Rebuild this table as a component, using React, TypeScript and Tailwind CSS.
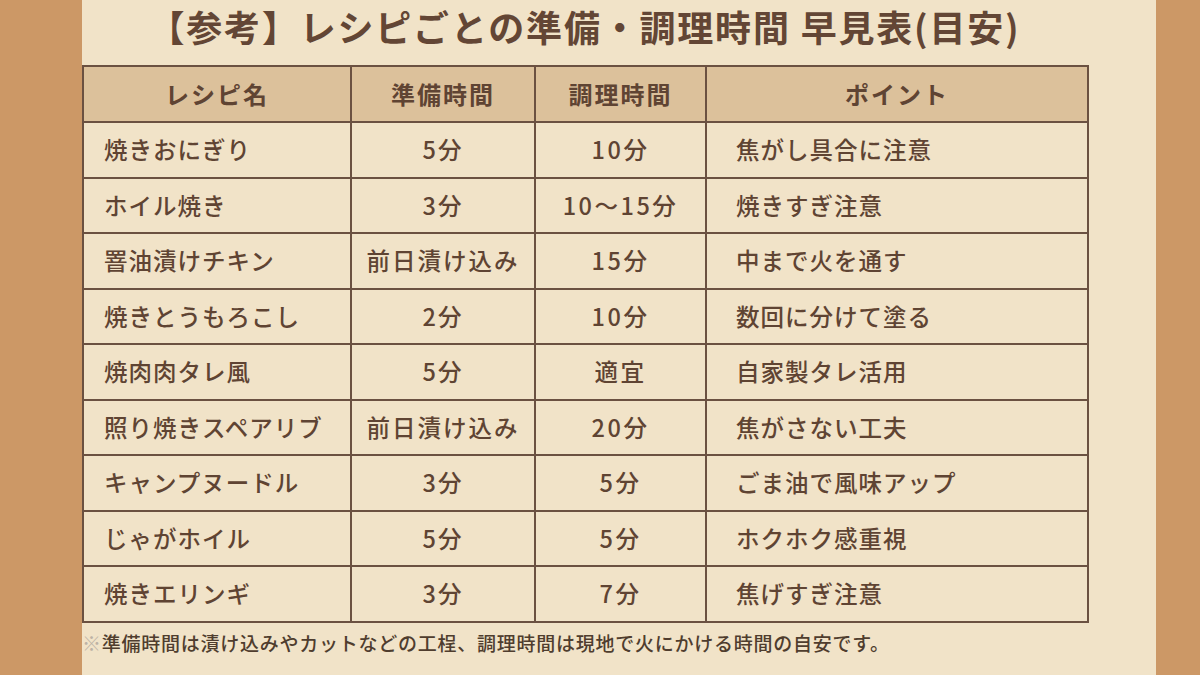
const rows = [
  { name: "焼きおにぎり", prep: "5分", cook: "10分", point: "焦がし具合に注意" },
  { name: "ホイル焼き", prep: "3分", cook: "10～15分", point: "焼きすぎ注意" },
  { name: "罯油漬けチキン", prep: "前日漬け込み", cook: "15分", point: "中まで火を通す" },
  { name: "焼きとうもろこし", prep: "2分", cook: "10分", point: "数回に分けて塗る" },
  { name: "焼肉肉タレ風", prep: "5分", cook: "適宜", point: "自家製タレ活用" },
  { name: "照り焼きスペアリブ", prep: "前日漬け込み", cook: "20分", point: "焦がさない工夫" },
  { name: "キャンプヌードル", prep: "3分", cook: "5分", point: "ごま油で風味アップ" },
  { name: "じゃがホイル", prep: "5分", cook: "5分", point: "ホクホク感重視" },
  { name: "焼きエリンギ", prep: "3分", cook: "7分", point: "焦げすぎ注意" },
];

const font = { fontFamily: '"Noto Sans CJK JP", "Noto Sans", sans-serif' };

export default function App() {
  return (
    <div className="flex h-[675px] w-[1200px] bg-[#cc9866]" style={font}>
      <div className="w-[82px] shrink-0" />
      <div className="flex w-[1074px] shrink-0 flex-col overflow-hidden bg-[#f1e3c8] text-[#5f4433]">
        <div className="flex h-[65px] w-[1005px] items-center justify-center pb-[14px]">
          <h1 className="text-[36px] font-bold leading-none tracking-[1.8px] text-[#634635]">
            【参考】レシピごとの準備・調理時間 早見表(目安)
          </h1>
        </div>
        <table className="w-[1005px] table-fixed border-collapse border-2 border-[#6b5141]">
          <colgroup>
            <col className="w-[268px]" />
            <col className="w-[184px]" />
            <col className="w-[171px]" />
            <col className="w-[382px]" />
          </colgroup>
          <thead>
            <tr className="h-[56px] bg-[#dcc19b] text-[24px] font-bold tracking-[2px]">
              <th className="border-2 border-[#6b5141] text-center">レシピ名</th>
              <th className="border-2 border-[#6b5141] text-center">準備時間</th>
              <th className="border-2 border-[#6b5141] text-center">調理時間</th>
              <th className="border-2 border-[#6b5141] text-center">ポイント</th>
            </tr>
          </thead>
          <tbody>
            {rows.map((r) => (
              <tr key={r.name} className="h-[55.5px] text-[23.5px] font-medium tracking-[1px]">
                <td className="border-2 border-[#6b5141] pl-[20px] text-left">{r.name}</td>
                <td className="border-2 border-[#6b5141] text-center tracking-[2px]">{r.prep}</td>
                <td className="border-2 border-[#6b5141] text-center tracking-[2.5px]">{r.cook}</td>
                <td className="border-2 border-[#6b5141] pl-[29px] text-left">{r.point}</td>
              </tr>
            ))}
          </tbody>
        </table>
        <p className="mt-[6px] whitespace-nowrap text-[19px] font-medium tracking-[0.75px] text-[#4f3d2e]">
          <span className="text-[#bdb2a5]">※</span>準備時間は漬け込みやカットなどの工桯、調理時間は現地で火にかける時間の自安です。
        </p>
      </div>
      <div className="flex-1" />
    </div>
  );
}
